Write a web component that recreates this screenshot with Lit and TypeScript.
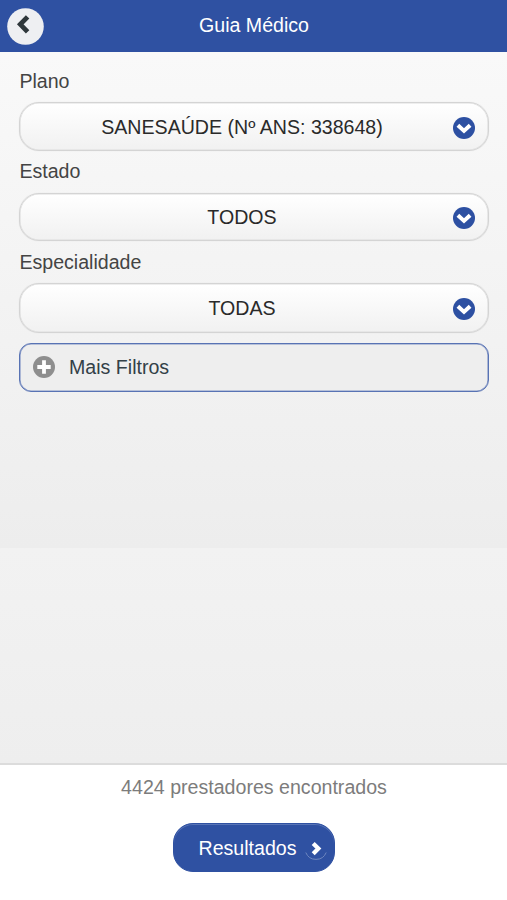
import { LitElement, html, css } from "lit";
import { customElement, property } from "lit/decorators.js";

@customElement("select-field")
class SelectField extends LitElement {
  @property() label = "";
  @property() value = "";

  static styles = css`
    :host { display: block; }
    .label { height: 50px; line-height: 58px; color: #444; box-sizing: border-box; padding-left: 0.4px; }
    :host(.follow) .label { height: 42px; line-height: 41px; }
    :host(.follow) .select { height: 48px; }
    :host(.last) .label { line-height: 43px; }
    :host(.last) .select { height: 50px; }
    .select {
      box-sizing: border-box; height: 49px; display: flex; align-items: center;
      border: 1px solid #d4d4d4; border-radius: 20px;
      background: linear-gradient(#ffffff, #f1f1f1);
      box-shadow: inset 0 0 0 0.6px #dedede, 0 0 1px rgba(0, 0, 0, 0.12);
      padding: 0 13px 0 11px; color: #2a2a2a;
    }
    .value { flex: 1; text-align: center; line-height: 46px; }
    .icon { width: 22px; height: 22px; flex: none; margin-top: 3px; }
    :host(.follow) .icon { margin-top: 2px; }
    :host(.last) .icon { margin-top: 1px; }
  `;

  render() {
    return html`
      <div class="label">${this.label}</div>
      <div class="select">
        <span class="value">${this.value}</span>
        <svg class="icon" viewBox="0 0 22 22">
          <circle cx="11" cy="11" r="11" fill="#2d50a2" />
          <path d="M4.9 8.3 L11 13.9 L17.1 8.3" fill="none" stroke="#fff" stroke-width="4" />
        </svg>
      </div>
    `;
  }
}

@customElement("app-root")
class AppRoot extends LitElement {
  static styles = css`
    :host {
      display: flex; flex-direction: column; height: 900px; overflow: hidden;
      font: 19.6px "Liberation Sans", Arial, sans-serif; background: #fff;
    }
    .header {
      height: 52px; flex: none; background: #2f51a2; color: #fff;
      display: grid; grid-template-columns: 51px 1fr 51px; align-items: center;
    }
    .back { width: 37px; height: 37px; margin-left: 7px; margin-top: 1px; display: block; }
    .title { text-align: center; line-height: 50px; margin-bottom: 2px; padding-left: 1px; }
    .content {
      flex: 1; box-sizing: border-box; padding: 0 18px 0 19px;
      background:
        linear-gradient(#f9f9f9, #ededed) 0 0 / 100% 496px no-repeat,
        linear-gradient(#f2f2f2, #eeeeee) 0 496px / 100% 216px no-repeat;
    }
    .more {
      box-sizing: border-box; height: 49px; margin-top: 10px; display: flex; align-items: center;
      border: 1px solid #5873b4; border-radius: 12px; background: #eeeeee;
      box-shadow: inset 0 0 0 0.6px #8093c4;
      padding-left: 13px; color: #334047;
    }
    .plus { width: 22px; height: 22px; margin-right: 14px; margin-bottom: 1px; }
    .footer {
      height: 137px; flex: none; box-sizing: border-box; border-top: 2px solid #dcdcdc;
      display: flex; flex-direction: column; align-items: center; background: #fff;
    }
    .count { color: #7c7c7c; line-height: 44px; height: 58px; padding-left: 1px; }
    .results {
      width: 162px; height: 49px; box-sizing: border-box; border-radius: 20px;
      background: #2f51a2; color: #fff; border: 1px solid #2f51a2;
      box-shadow: inset 0 1px 0 #5874b6;
      display: flex; align-items: center; padding-left: 25px; gap: 8px;
    }
    .results span { padding-top: 1px; }
    .arrow { width: 22px; height: 22px; margin-top: 2px; }
  `;

  render() {
    return html`
      <div class="header">
        <svg class="back" viewBox="0 0 37 37">
          <circle cx="18.5" cy="18.5" r="18.3" fill="#eeeff2" />
          <path d="M20.6 8.8 L13.3 16.3 L20.6 23.8" fill="none" stroke="#2f373b" stroke-width="4.8" />
        </svg>
        <div class="title">Guia Médico</div>
      </div>
      <div class="content">
        <select-field label="Plano" value="SANESAÚDE (Nº ANS: 338648)"></select-field>
        <select-field class="follow" label="Estado" value="TODOS"></select-field>
        <select-field class="follow last" label="Especialidade" value="TODAS"></select-field>
        <div class="more">
          <svg class="plus" viewBox="0 0 22 22">
            <circle cx="11" cy="11" r="11" fill="#8e8e8e" />
            <path d="M11 4.3 V17.7 M4.3 11 H17.7" stroke="#fff" stroke-width="3.8" />
          </svg>
          <span>Mais Filtros</span>
        </div>
      </div>
      <div class="footer">
        <div class="count">4424 prestadores encontrados</div>
        <div class="results">
          <span>Resultados</span>
          <svg class="arrow" viewBox="0 0 22 22">
            <path d="M.8 14.5 A11 11 0 0 0 21.2 14.5" fill="none" stroke="#6f87bf" stroke-width="1" />
            <path d="M8.2 5.4 L13.4 10.6 L8.2 15.8" fill="none" stroke="#fff" stroke-width="4.2" />
          </svg>
        </div>
      </div>
    `;
  }
}
